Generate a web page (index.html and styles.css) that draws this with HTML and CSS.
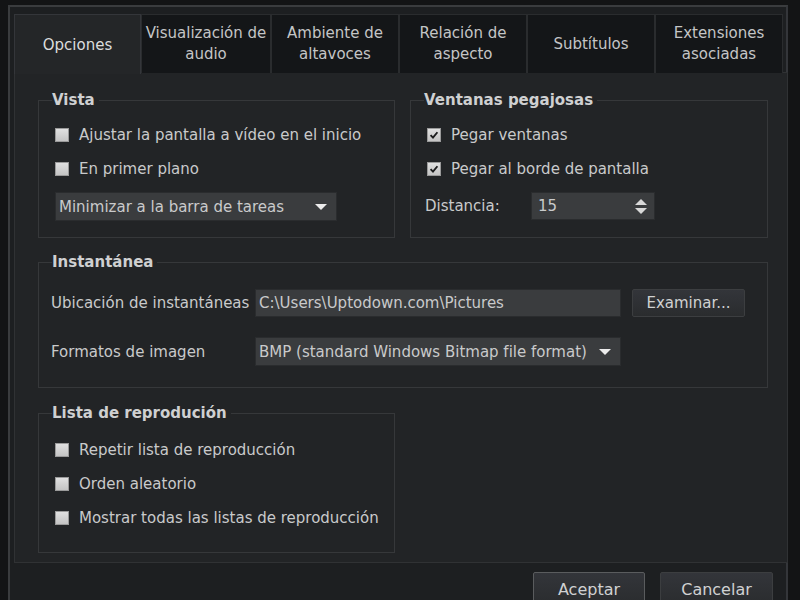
FILE: index.html
```html
<!DOCTYPE html>
<html lang="es">
<head>
  <meta charset="UTF-8">
  <meta name="viewport" content="width=device-width, initial-scale=1.0">
  <title>Opciones</title>
  <link rel="stylesheet" href="styles.css">
</head>
<body>

<div class="window">
  <div class="tabs">
    <div class="tab active">Opciones</div>
    <div class="tab wide">Visualización de<br>audio</div>
    <div class="tab">Ambiente de<br>altavoces</div>
    <div class="tab">Relación de<br>aspecto</div>
    <div class="tab">Subtítulos</div>
    <div class="tab">Extensiones<br>asociadas</div>
  </div>

  <div class="pane">
    <fieldset class="group">
      <legend>Vista</legend>
      <div class="rows">
        <label class="check"><span class="box"></span>Ajustar la pantalla a vídeo en el inicio</label>
        <label class="check"><span class="box"></span>En primer plano</label>
        <div class="select short">Minimizar a la barra de tareas<span class="arrow"></span></div>
      </div>
    </fieldset>

    <fieldset class="group">
      <legend>Ventanas pegajosas</legend>
      <div class="rows">
        <label class="check"><span class="box checked"><svg viewBox="0 0 14 14" width="14" height="14"><path d="M3 7.2 L5.8 10 L11 3.8" fill="none" stroke="#1b1c1d" stroke-width="2.2"/></svg></span>Pegar ventanas</label>
        <label class="check"><span class="box checked"><svg viewBox="0 0 14 14" width="14" height="14"><path d="M3 7.2 L5.8 10 L11 3.8" fill="none" stroke="#1b1c1d" stroke-width="2.2"/></svg></span>Pegar al borde de pantalla</label>
        <div class="spin-row">
          <span class="spin-label">Distancia:</span>
          <div class="spin">15
            <span class="spin-arrows"><span class="up"></span><span class="down"></span></span>
          </div>
        </div>
      </div>
    </fieldset>

    <fieldset class="group full">
      <legend>Instantánea</legend>
      <div class="form-grid">
        <span class="field-label">Ubicación de instantáneas</span>
        <div class="input">C:\Users\Uptodown.com\Pictures</div>
        <button class="btn browse">Examinar...</button>
        <span class="field-label">Formatos de imagen</span>
        <div class="select">BMP (standard Windows Bitmap file format)<span class="arrow"></span></div>
      </div>
    </fieldset>

    <fieldset class="group playlist">
      <legend>Lista de reprodución</legend>
      <div class="rows">
        <label class="check"><span class="box"></span>Repetir lista de reproducción</label>
        <label class="check"><span class="box"></span>Orden aleatorio</label>
        <label class="check"><span class="box"></span>Mostrar todas las listas de reproducción</label>
      </div>
    </fieldset>
  </div>

  <div class="actions">
    <button class="btn default">Aceptar</button>
    <button class="btn">Cancelar</button>
  </div>
</div>

</body>
</html>
```

FILE: styles.css
```css
html, body {
  margin: 0;
  height: 100%;
  overflow: hidden;
}
body {
  background-color: #131415;
  font-family: "DejaVu Sans", Verdana, sans-serif;
  font-size: 15px;
  color: #c9cacb;
}
.window {
  margin: 5px 0 0 8px;
  width: 780px;
  height: 620px;
  padding: 7px 2px 0 4px;
  box-sizing: border-box;
  background-color: #1d1f21;
  border-top: 2px solid #3a3c3e;
  border-left: 2px solid #3a3c3e;
  border-right: 2px solid #34363a;
}
.tabs {
  display: flex;
  position: relative;
  z-index: 1;
}
.tab {
  width: 128px;
  height: 59px;
  box-sizing: border-box;
  display: flex;
  align-items: center;
  justify-content: center;
  text-align: center;
  line-height: 21px;
  background-color: #141618;
  border: 1px solid #2a2c2e;
  border-bottom: none;
  color: #c4c5c6;
}
.tab.wide {
  width: 130px;
}
.tab.active {
  width: 127px;
  height: 60px;
  margin-bottom: -1px;
  background-color: #242628;
  border-color: #34363a;
  color: #dcdddd;
  padding-top: 2px;
}
.pane {
  width: 774px;
  box-sizing: border-box;
  height: 491px;
  margin-top: -1px;
  padding: 18px 20px 0 23px;
  background-color: #222426;
  border: 1px solid #303234;
  display: grid;
  grid-template-columns: 357px 358px;
  column-gap: 15px;
  row-gap: 15px;
  align-content: start;
}
.group {
  margin: 0;
  padding: 0 14px 16px 16px;
  border: 1px solid #36383a;
  min-width: 0;
}
.group legend {
  font-weight: bold;
  font-size: 15px;
  line-height: 18px;
  padding: 0 4px 0 0;
  margin-left: -3px;
  color: #cfd0d1;
}
.group.full {
  grid-column: 1 / 3;
  padding: 18px 0 21px 16px;
}
.group.playlist {
  margin-top: 1px;
  padding-bottom: 22px;
}
.rows {
  display: flex;
  flex-direction: column;
  gap: 10px;
  padding-top: 14px;
}
.playlist .rows {
  padding-top: 16px;
}
.check {
  display: flex;
  align-items: center;
  height: 24px;
  white-space: nowrap;
}
.box {
  width: 14px;
  height: 14px;
  margin-right: 10px;
  background: linear-gradient(#e0e0e0, #c4c4c4);
  border: 1px solid #9a9a9a;
  box-sizing: border-box;
  display: flex;
  align-items: center;
  justify-content: center;
}
.box svg {
  display: block;
}
.select, .input, .spin {
  height: 29px;
  box-sizing: border-box;
  background-color: #3a3c3e;
  border: 1px solid #2a2c2e;
  display: flex;
  align-items: center;
  padding-left: 3px;
  white-space: nowrap;
  position: relative;
}
.select.short {
  width: 282px;
  margin-top: 1px;
}
.arrow {
  margin-left: auto;
  margin-right: 9px;
  width: 0;
  height: 0;
  border-left: 6px solid transparent;
  border-right: 6px solid transparent;
  border-top: 6px solid #ececec;
}
.spin-row {
  display: flex;
  align-items: center;
  margin-top: 1px;
}
.spin-label {
  width: 106px;
  margin-left: -2px;
}
.spin {
  width: 124px;
  height: 28px;
  padding-left: 6px;
}
.spin-arrows {
  margin-left: auto;
  margin-right: 7px;
  display: flex;
  flex-direction: column;
  gap: 3px;
}
.spin-arrows .up {
  border-left: 6px solid transparent;
  border-right: 6px solid transparent;
  border-bottom: 6px solid #d8d8d8;
}
.spin-arrows .down {
  border-left: 6px solid transparent;
  border-right: 6px solid transparent;
  border-top: 6px solid #d8d8d8;
}
.form-grid {
  display: grid;
  grid-template-columns: 204px 366px 124px;
  margin-left: -4px;
  row-gap: 20px;
  align-items: center;
}
.field-label {
  white-space: nowrap;
}
.input {
  height: 28px;
}
.btn {
  font-family: "DejaVu Sans", Verdana, sans-serif;
  font-size: 15px;
  color: #d0d1d2;
  background: linear-gradient(#33353a, #2a2c2e);
  border: 1px solid #3c3e40;
  border-radius: 2px;
  padding: 0;
  height: 28px;
}
.browse {
  width: 113px;
  justify-self: end;
}
.actions {
  display: flex;
  justify-content: flex-end;
  gap: 15px;
  margin-top: 9px;
  padding-right: 11px;
}
.actions .btn {
  width: 113px;
  height: 34px;
  font-size: 16px;
}
.actions .btn.default {
  width: 112px;
  border-color: #5a5c5e;
}
```
